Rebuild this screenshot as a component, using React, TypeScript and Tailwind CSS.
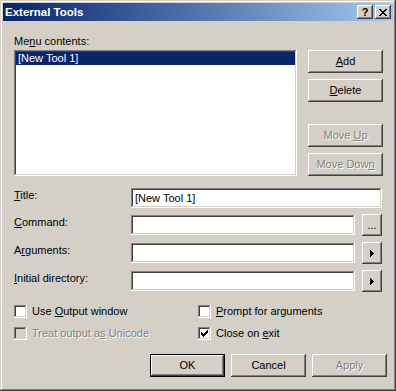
const raised =
  "bg-[#d4d0c8] shadow-[inset_-1px_-1px_#404040,inset_1px_1px_#ffffff,inset_-2px_-2px_#808080,inset_2px_2px_#d4d0c8]";
const sunken =
  "shadow-[inset_-1px_-1px_#ffffff,inset_1px_1px_#808080,inset_-2px_-2px_#d4d0c8,inset_2px_2px_#404040]";
const disabledText = "text-[#808080] [text-shadow:1px_1px_0_#ffffff]";

function Button({
  children,
  disabled,
  isDefault,
  className = "",
}: {
  children: React.ReactNode;
  disabled?: boolean;
  isDefault?: boolean;
  className?: string;
}) {
  const frame = isDefault
    ? "bg-[#d4d0c8] shadow-[inset_-1px_-1px_#000000,inset_1px_1px_#000000,inset_-2px_-2px_#404040,inset_2px_2px_#ffffff,inset_-3px_-3px_#808080]"
    : raised;
  return (
    <div
      className={`flex h-[23px] w-[75px] items-center justify-center ${frame} ${
        disabled ? disabledText : ""
      } ${className}`}
    >
      {children}
    </div>
  );
}

function TextBox({ width, value }: { width: string; value?: string }) {
  return (
    <div className={`flex h-[20px] items-center bg-white pl-[4px] ${sunken} ${width}`}>
      {value}
    </div>
  );
}

function Arrow() {
  return (
    <svg width="4" height="7" viewBox="0 0 4 7" shapeRendering="crispEdges">
      <path d="M0 0h1v7h-1z M1 1h1v5h-1z M2 2h1v3h-1z M3 3h1v1h-1z" fill="#000" />
    </svg>
  );
}

function SideButton({ children }: { children: React.ReactNode }) {
  return (
    <div className={`ml-[7px] -mt-[1px] flex h-[22px] w-[20px] items-center justify-center ${raised}`}>
      {children}
    </div>
  );
}

function FieldRow({
  label,
  className = "",
  children,
}: {
  label: React.ReactNode;
  className?: string;
  children: React.ReactNode;
}) {
  return (
    <div className={`flex h-[20px] items-start ${className}`}>
      <div className="mt-[1px] w-[117px]">{label}</div>
      {children}
    </div>
  );
}

function CheckBox({
  label,
  checked,
  disabled,
  className = "",
}: {
  label: React.ReactNode;
  checked?: boolean;
  disabled?: boolean;
  className?: string;
}) {
  return (
    <div className={`flex h-[13px] items-center ${className}`}>
      <div
        className={`relative h-[13px] w-[13px] ${disabled ? "bg-[#d4d0c8]" : "bg-white"} ${sunken}`}
      >
        {checked && (
          <svg
            className="absolute left-[3px] top-[3px]"
            width="7"
            height="7"
            viewBox="0 0 7 7"
            shapeRendering="crispEdges"
          >
            <path
              d="M6 0h1v1h-1z M5 1h2v1h-2z M0 2h1v1h-1z M4 2h3v1h-3z M0 3h2v1h-2z M3 3h3v1h-3z M0 4h5v1h-5z M1 5h3v1h-3z M2 6h1v1h-1z"
              fill="#000"
            />
          </svg>
        )}
      </div>
      <div className={`ml-[5px] ${disabled ? disabledText : ""}`}>{label}</div>
    </div>
  );
}

function TitleBar() {
  return (
    <div className="flex h-[18px] items-center bg-linear-to-r from-[#0a246a] to-[#a6caf0] pl-[2px] pr-[2px]">
      <div className="flex-1 text-[11.5px] font-bold leading-[18px] text-white">External Tools</div>
      <div className={`flex h-[14px] w-[16px] items-center justify-center text-[11px] font-bold leading-none ${raised}`}>
        ?
      </div>
      <div className={`ml-[2px] flex h-[14px] w-[16px] items-center justify-center ${raised}`}>
        <svg width="8" height="7" viewBox="0 0 8 7" shapeRendering="crispEdges">
          <path
            d="M0 0h2v1h-2z M6 0h2v1h-2z M1 1h2v1h-2z M5 1h2v1h-2z M2 2h4v1h-4z M3 3h2v1h-2z M2 4h4v1h-4z M1 5h2v1h-2z M5 5h2v1h-2z M0 6h2v1h-2z M6 6h2v1h-2z"
            fill="#000"
          />
        </svg>
      </div>
    </div>
  );
}

export default function App() {
  return (
    <div className="flex h-[391px] w-[396px] flex-col bg-[#d4d0c8] p-[3px] font-['Liberation_Sans',Arial,sans-serif] text-[11px] leading-[13px] text-black shadow-[inset_-1px_-1px_#404040,inset_1px_1px_#d4d0c8,inset_-2px_-2px_#808080,inset_2px_2px_#ffffff]">
      <TitleBar />

      <div className="flex flex-col pl-[11px] pt-[14px]">
        <div className="flex">
          <div className="w-[283px]">
            <div className="h-[13px]">
              Me<u>n</u>u contents:
            </div>
            <div className={`mt-[2px] h-[126px] bg-white p-[2px] ${sunken}`}>
              <div className="h-[13px] bg-[#0a246a] pl-[2px] text-white">[New Tool 1]</div>
            </div>
          </div>
          <div className="ml-[11px] flex flex-col pt-[15px]">
            <Button>
              <span>
                <u>A</u>dd
              </span>
            </Button>
            <Button className="mt-[6px]">
              <span>
                <u>D</u>elete
              </span>
            </Button>
            <Button disabled className="mt-[22px]">
              <span>
                Move <u>U</u>p
              </span>
            </Button>
            <Button disabled className="mt-[6px]">
              <span>
                Move Dow<u>n</u>
              </span>
            </Button>
          </div>
        </div>

        <FieldRow
          className="mt-[12px]"
          label={
            <span>
              <u>T</u>itle:
            </span>
          }
        >
          <TextBox width="w-[251px]" value="[New Tool 1]" />
        </FieldRow>
        <FieldRow
          className="mt-[7px]"
          label={
            <span>
              <u>C</u>ommand:
            </span>
          }
        >
          <TextBox width="w-[224px]" />
          <SideButton>
            <span className="leading-[11px]">...</span>
          </SideButton>
        </FieldRow>
        <FieldRow
          className="mt-[8px]"
          label={
            <span>
              A<u>r</u>guments:
            </span>
          }
        >
          <TextBox width="w-[224px]" />
          <SideButton>
            <Arrow />
          </SideButton>
        </FieldRow>
        <FieldRow
          className="mt-[8px]"
          label={
            <span>
              <u>I</u>nitial directory:
            </span>
          }
        >
          <TextBox width="w-[224px]" />
          <SideButton>
            <Arrow />
          </SideButton>
        </FieldRow>

        <div className="mt-[14px] flex">
          <div className="w-[184px]">
            <CheckBox
              label={
                <span>
                  Use <u>O</u>utput window
                </span>
              }
            />
            <CheckBox
              disabled
              className="mt-[9px]"
              label={
                <span>
                  Treat output a<u>s</u> Unicode
                </span>
              }
            />
          </div>
          <div>
            <CheckBox
              label={
                <span>
                  <u>P</u>rompt for arguments
                </span>
              }
            />
            <CheckBox
              checked
              className="mt-[9px]"
              label={
                <span>
                  Close on <u>e</u>xit
                </span>
              }
            />
          </div>
        </div>

        <div className="ml-[136px] mt-[14px] flex gap-[6px]">
          <Button isDefault>OK</Button>
          <Button>Cancel</Button>
          <Button disabled>Apply</Button>
        </div>
      </div>
    </div>
  );
}
